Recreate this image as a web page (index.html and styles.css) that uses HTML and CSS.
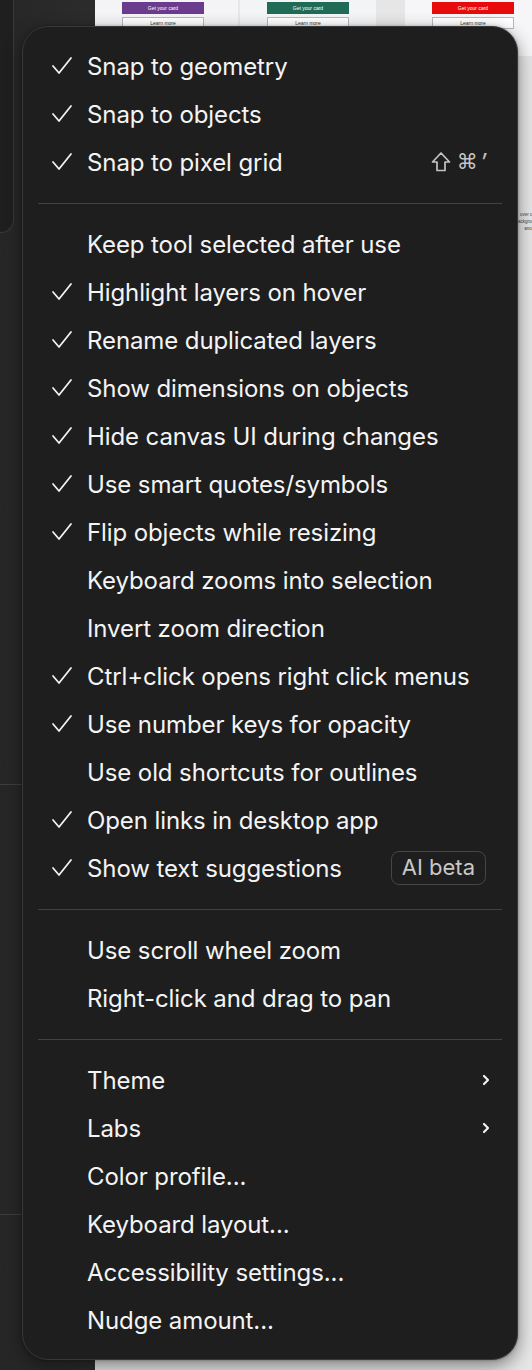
FILE: index.html
```html
<!DOCTYPE html>
<html>
<head>
<meta charset="utf-8">
<link rel="stylesheet" href="styles.css">
</head>
<body>
<div class="app">
  <aside class="sidebar">
    <div class="panel"></div>
    <div class="rule rule-a"></div>
    <div class="rule rule-b"></div>
  </aside>
  <main class="canvas">
    <div class="cards">
      <div class="card c1">
        <div class="btn purple">Get your card</div>
        <div class="btn outline">Learn more</div>
      </div>
      <div class="card c2">
        <div class="btn green">Get your card</div>
        <div class="btn outline">Learn more</div>
      </div>
      <div class="card c3">
        <div class="btn red">Get your card</div>
        <div class="btn outline">Learn more</div>
      </div>
    </div>
    <p class="stray">over or<br>ackgrou<br>ance</p>
  </main>
</div>

<div class="menu">
  <div class="item"><svg class="check" viewBox="0 0 24 24"><path d="M3 12l6 7L21 4"/></svg><span class="label">Snap to geometry</span></div>
  <div class="item"><svg class="check" viewBox="0 0 24 24"><path d="M3 12l6 7L21 4"/></svg><span class="label">Snap to objects</span></div>
  <div class="item"><svg class="check" viewBox="0 0 24 24"><path d="M3 12l6 7L21 4"/></svg><span class="label">Snap to pixel grid</span>
    <span class="shortcut"><svg class="shift" viewBox="0 0 20 22"><path d="M10 2L1.5 11H6v8.5h8V11h4.5z"/></svg><span class="cmd">⌘</span><span class="prime">′</span></span></div>
  <div class="sep"></div>
  <div class="item"><span class="nocheck"></span><span class="label">Keep tool selected after use</span></div>
  <div class="item"><svg class="check" viewBox="0 0 24 24"><path d="M3 12l6 7L21 4"/></svg><span class="label">Highlight layers on hover</span></div>
  <div class="item"><svg class="check" viewBox="0 0 24 24"><path d="M3 12l6 7L21 4"/></svg><span class="label">Rename duplicated layers</span></div>
  <div class="item"><svg class="check" viewBox="0 0 24 24"><path d="M3 12l6 7L21 4"/></svg><span class="label">Show dimensions on objects</span></div>
  <div class="item"><svg class="check" viewBox="0 0 24 24"><path d="M3 12l6 7L21 4"/></svg><span class="label">Hide canvas UI during changes</span></div>
  <div class="item"><svg class="check" viewBox="0 0 24 24"><path d="M3 12l6 7L21 4"/></svg><span class="label">Use smart quotes/symbols</span></div>
  <div class="item"><svg class="check" viewBox="0 0 24 24"><path d="M3 12l6 7L21 4"/></svg><span class="label">Flip objects while resizing</span></div>
  <div class="item"><span class="nocheck"></span><span class="label">Keyboard zooms into selection</span></div>
  <div class="item"><span class="nocheck"></span><span class="label">Invert zoom direction</span></div>
  <div class="item"><svg class="check" viewBox="0 0 24 24"><path d="M3 12l6 7L21 4"/></svg><span class="label">Ctrl+click opens right click menus</span></div>
  <div class="item"><svg class="check" viewBox="0 0 24 24"><path d="M3 12l6 7L21 4"/></svg><span class="label">Use number keys for opacity</span></div>
  <div class="item"><span class="nocheck"></span><span class="label">Use old shortcuts for outlines</span></div>
  <div class="item"><svg class="check" viewBox="0 0 24 24"><path d="M3 12l6 7L21 4"/></svg><span class="label">Open links in desktop app</span></div>
  <div class="item"><svg class="check" viewBox="0 0 24 24"><path d="M3 12l6 7L21 4"/></svg><span class="label">Show text suggestions</span><span class="badge">AI beta</span></div>
  <div class="sep"></div>
  <div class="item"><span class="nocheck"></span><span class="label">Use scroll wheel zoom</span></div>
  <div class="item"><span class="nocheck"></span><span class="label">Right-click and drag to pan</span></div>
  <div class="sep"></div>
  <div class="item"><span class="nocheck"></span><span class="label">Theme</span><svg class="chev" viewBox="0 0 12 14"><path d="M4 3l4 4-4 4"/></svg></div>
  <div class="item"><span class="nocheck"></span><span class="label">Labs</span><svg class="chev" viewBox="0 0 12 14"><path d="M4 3l4 4-4 4"/></svg></div>
  <div class="item"><span class="nocheck"></span><span class="label">Color profile...</span></div>
  <div class="item"><span class="nocheck"></span><span class="label">Keyboard layout...</span></div>
  <div class="item"><span class="nocheck"></span><span class="label">Accessibility settings...</span></div>
  <div class="item"><span class="nocheck"></span><span class="label">Nudge amount...</span></div>
</div>
</body>
</html>
```

FILE: styles.css
```css
* { box-sizing: border-box; }
html, body { margin: 0; padding: 0; }
body {
  width: 532px;
  height: 1370px;
  overflow: hidden;
  background: #2a2a2a;
  font-family: "Inter", "Noto Sans", sans-serif;
  position: relative;
}
.app {
  display: grid;
  grid-template-columns: 95px 1fr;
  height: 1370px;
}
.sidebar {
  background: linear-gradient(90deg, #262626, #2c2c2c);
  display: flex;
  flex-direction: column;
}
.panel {
  width: 14px;
  height: 233px;
  background: #1f1f1f;
  border-right: 1px solid #3a3a3a;
  border-bottom: 1px solid #3a3a3a;
  border-radius: 0 0 13px 0;
}
.rule {
  height: 1px;
  width: 30px;
  background: #3e3e3e;
}
.rule-a { margin-top: 551px; }
.rule-b { margin-top: 429px; }

.canvas {
  background: #e6e6e6;
  position: relative;
}
.cards {
  display: flex;
  height: 56px;
}
.card {
  background: #f4f4f6;
  padding: 2px 0 0 27px;
  display: flex;
  flex-direction: column;
  gap: 3px;
}
.c1 { width: 143px; }
.c2 { width: 136px; margin-left: 2px; background: #f3f4f5; }
.c3 { width: 127px; margin-left: 29px; background: #f6f6f8; }
.btn {
  width: 82px;
  height: 12px;
  font-size: 5px;
  line-height: 12px;
  text-align: center;
  color: #fff;
  font-family: "Liberation Sans", sans-serif;
}
.purple { background: #6b3c8e; }
.green { background: #1f6b55; }
.red { background: #e80b0b; }
.outline {
  background: #fff;
  border: 1px solid #b8b8c4;
  color: #333;
  line-height: 10px;
}
.stray {
  position: absolute;
  left: 423px;
  top: 211px;
  margin: 0;
  font-size: 4.5px;
  line-height: 7px;
  color: #444;
  text-align: right;
  font-family: "Liberation Sans", sans-serif;
}

.menu {
  position: absolute;
  left: 22px;
  top: 26px;
  width: 496px;
  height: 1334px;
  background: #1e1e1e;
  border: 1px solid #383838;
  border-radius: 26px;
  padding: 15px 15px;
  box-shadow: 0 6px 18px rgba(0,0,0,0.45), 0 0 3px rgba(0,0,0,0.3);
  color: #f4f4f4;
}
.item {
  display: flex;
  align-items: center;
  height: 48px;
  padding: 0 16px 0 12px;
  font-size: 24px;
  font-weight: 400;
  letter-spacing: -0.1px;
  white-space: nowrap;
}
.check, .nocheck {
  width: 24px;
  height: 24px;
  flex: none;
  margin-right: 13px;
}
.check path {
  fill: none;
  stroke: #f2f2f2;
  stroke-width: 1.8;
  stroke-linecap: round;
  stroke-linejoin: round;
}
.label { flex: 1; }
.shortcut {
  display: flex;
  align-items: center;
  color: #c4c4c4;
}
.shift {
  width: 20px;
  height: 22px;
  margin-right: 6px;
}
.shift path {
  fill: none;
  stroke: #c4c4c4;
  stroke-width: 1.7;
  stroke-linejoin: round;
}
.cmd {
  font-family: "DejaVu Sans", sans-serif;
  font-size: 21px;
}
.prime {
  font-family: "Inter", "DejaVu Sans", sans-serif;
  font-size: 24px;
  font-style: italic;
  margin-left: 3px;
}
.badge {
  height: 34px;
  padding: 0 10px;
  border: 1.5px solid #454545;
  border-radius: 8px;
  font-size: 22px;
  line-height: 31px;
  letter-spacing: 0;
  color: #c8c8c8;
}
.chev {
  width: 12px;
  height: 14px;
  margin-right: -6px;
}
.chev path {
  fill: none;
  stroke: #f2f2f2;
  stroke-width: 2.2;
  stroke-linecap: round;
  stroke-linejoin: round;
}
.sep {
  height: 1px;
  background: #424242;
  margin: 17px 0 16px;
}
```
